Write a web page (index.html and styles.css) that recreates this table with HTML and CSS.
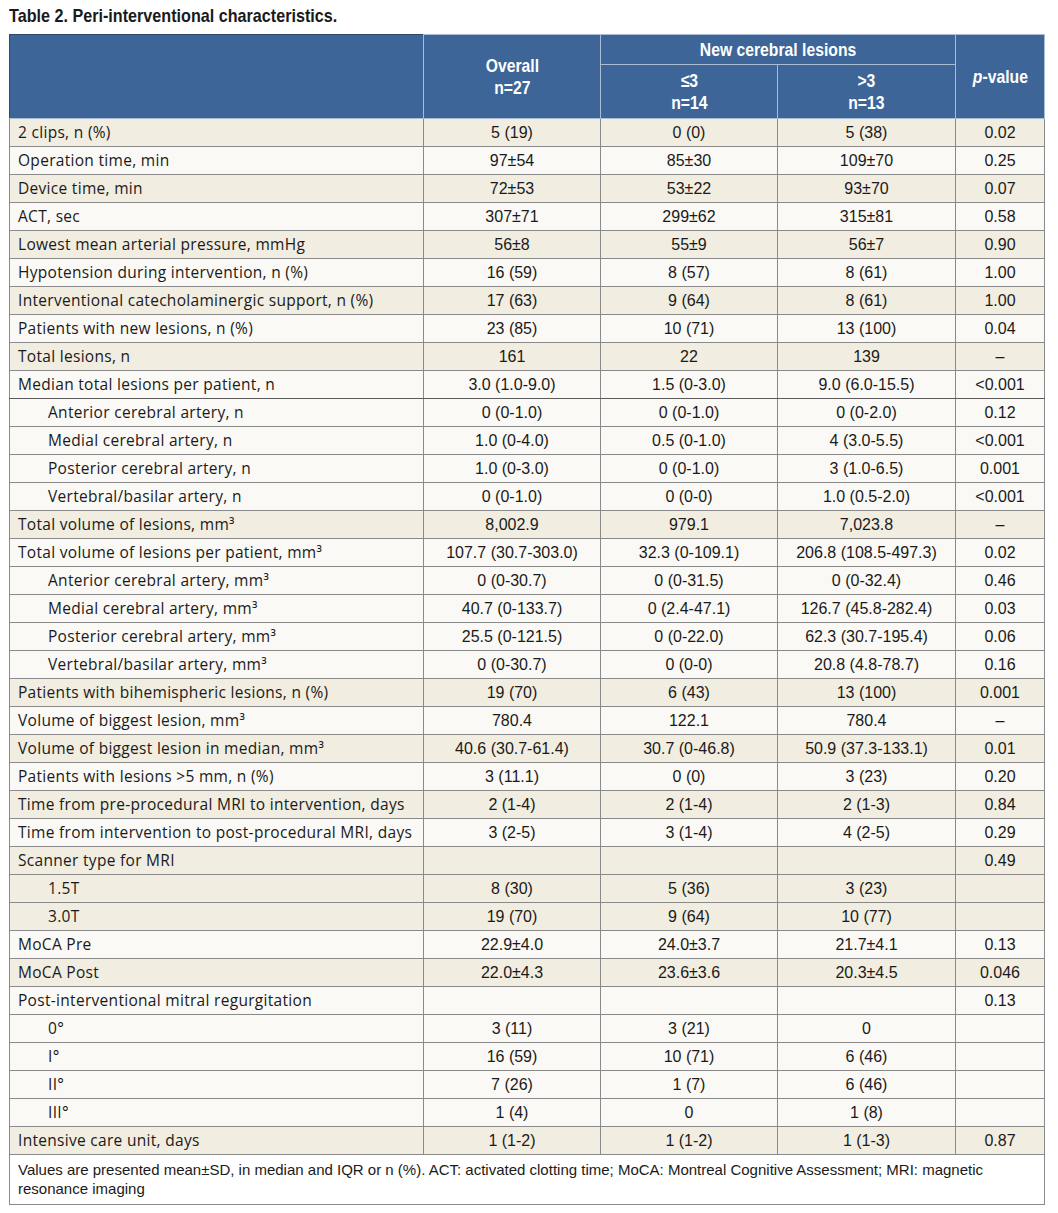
FILE: index.html
```html
<!DOCTYPE html>
<html>
<head>
<meta charset="utf-8">
<link rel="stylesheet" href="styles.css">
</head>
<body>
<div class="page">
<h1 class="title"><span class="cond">Table 2. Peri-interventional characteristics.</span></h1>
<table class="tbl">
<colgroup>
<col class="c-label"><col class="c-num"><col class="c-num"><col class="c-num2"><col class="c-p">
</colgroup>
<thead>
<tr class="h1">
<th rowspan="2"></th>
<th rowspan="2"><span class="cond">Overall<br>n=27</span></th>
<th colspan="2"><span class="cond">New cerebral lesions</span></th>
<th rowspan="2"><span class="cond"><i>p</i>-value</span></th>
</tr>
<tr class="h2">
<th><span class="cond">≤3<br>n=14</span></th>
<th><span class="cond">&gt;3<br>n=13</span></th>
</tr>
</thead>
<tbody>
<tr class="b"><td>2 clips, n (%)</td><td>5 (19)</td><td>0 (0)</td><td>5 (38)</td><td>0.02</td></tr>
<tr class="w"><td>Operation time, min</td><td>97±54</td><td>85±30</td><td>109±70</td><td>0.25</td></tr>
<tr class="b"><td>Device time, min</td><td>72±53</td><td>53±22</td><td>93±70</td><td>0.07</td></tr>
<tr class="w"><td>ACT, sec</td><td>307±71</td><td>299±62</td><td>315±81</td><td>0.58</td></tr>
<tr class="b"><td>Lowest mean arterial pressure, mmHg</td><td>56±8</td><td>55±9</td><td>56±7</td><td>0.90</td></tr>
<tr class="w"><td>Hypotension during intervention, n (%)</td><td>16 (59)</td><td>8 (57)</td><td>8 (61)</td><td>1.00</td></tr>
<tr class="b"><td>Interventional catecholaminergic support, n (%)</td><td>17 (63)</td><td>9 (64)</td><td>8 (61)</td><td>1.00</td></tr>
<tr class="w"><td>Patients with new lesions, n (%)</td><td>23 (85)</td><td>10 (71)</td><td>13 (100)</td><td>0.04</td></tr>
<tr class="b"><td>Total lesions, n</td><td>161</td><td>22</td><td>139</td><td>–</td></tr>
<tr class="w dk"><td>Median total lesions per patient, n</td><td>3.0 (1.0-9.0)</td><td>1.5 (0-3.0)</td><td>9.0 (6.0-15.5)</td><td>&lt;0.001</td></tr>
<tr class="w sub"><td>Anterior cerebral artery, n</td><td>0 (0-1.0)</td><td>0 (0-1.0)</td><td>0 (0-2.0)</td><td>0.12</td></tr>
<tr class="w sub"><td>Medial cerebral artery, n</td><td>1.0 (0-4.0)</td><td>0.5 (0-1.0)</td><td>4 (3.0-5.5)</td><td>&lt;0.001</td></tr>
<tr class="w sub"><td>Posterior cerebral artery, n</td><td>1.0 (0-3.0)</td><td>0 (0-1.0)</td><td>3 (1.0-6.5)</td><td>0.001</td></tr>
<tr class="w sub"><td>Vertebral/basilar artery, n</td><td>0 (0-1.0)</td><td>0 (0-0)</td><td>1.0 (0.5-2.0)</td><td>&lt;0.001</td></tr>
<tr class="b"><td>Total volume of lesions, mm³</td><td>8,002.9</td><td>979.1</td><td>7,023.8</td><td>–</td></tr>
<tr class="w"><td>Total volume of lesions per patient, mm³</td><td>107.7 (30.7-303.0)</td><td>32.3 (0-109.1)</td><td>206.8 (108.5-497.3)</td><td>0.02</td></tr>
<tr class="w sub"><td>Anterior cerebral artery, mm³</td><td>0 (0-30.7)</td><td>0 (0-31.5)</td><td>0 (0-32.4)</td><td>0.46</td></tr>
<tr class="w sub"><td>Medial cerebral artery, mm³</td><td>40.7 (0-133.7)</td><td>0 (2.4-47.1)</td><td>126.7 (45.8-282.4)</td><td>0.03</td></tr>
<tr class="w sub"><td>Posterior cerebral artery, mm³</td><td>25.5 (0-121.5)</td><td>0 (0-22.0)</td><td>62.3 (30.7-195.4)</td><td>0.06</td></tr>
<tr class="w sub"><td>Vertebral/basilar artery, mm³</td><td>0 (0-30.7)</td><td>0 (0-0)</td><td>20.8 (4.8-78.7)</td><td>0.16</td></tr>
<tr class="b"><td>Patients with bihemispheric lesions, n (%)</td><td>19 (70)</td><td>6 (43)</td><td>13 (100)</td><td>0.001</td></tr>
<tr class="w"><td>Volume of biggest lesion, mm³</td><td>780.4</td><td>122.1</td><td>780.4</td><td>–</td></tr>
<tr class="b"><td>Volume of biggest lesion in median, mm³</td><td>40.6 (30.7-61.4)</td><td>30.7 (0-46.8)</td><td>50.9 (37.3-133.1)</td><td>0.01</td></tr>
<tr class="w"><td>Patients with lesions &gt;5 mm, n (%)</td><td>3 (11.1)</td><td>0 (0)</td><td>3 (23)</td><td>0.20</td></tr>
<tr class="b"><td>Time from pre-procedural MRI to intervention, days</td><td>2 (1-4)</td><td>2 (1-4)</td><td>2 (1-3)</td><td>0.84</td></tr>
<tr class="w"><td>Time from intervention to post-procedural MRI, days</td><td>3 (2-5)</td><td>3 (1-4)</td><td>4 (2-5)</td><td>0.29</td></tr>
<tr class="b"><td>Scanner type for MRI</td><td></td><td></td><td></td><td>0.49</td></tr>
<tr class="b sub"><td>1.5T</td><td>8 (30)</td><td>5 (36)</td><td>3 (23)</td><td></td></tr>
<tr class="b sub"><td>3.0T</td><td>19 (70)</td><td>9 (64)</td><td>10 (77)</td><td></td></tr>
<tr class="w"><td>MoCA Pre</td><td>22.9±4.0</td><td>24.0±3.7</td><td>21.7±4.1</td><td>0.13</td></tr>
<tr class="b"><td>MoCA Post</td><td>22.0±4.3</td><td>23.6±3.6</td><td>20.3±4.5</td><td>0.046</td></tr>
<tr class="w"><td>Post-interventional mitral regurgitation</td><td></td><td></td><td></td><td>0.13</td></tr>
<tr class="w sub"><td>0°</td><td>3 (11)</td><td>3 (21)</td><td>0</td><td></td></tr>
<tr class="w sub"><td>I°</td><td>16 (59)</td><td>10 (71)</td><td>6 (46)</td><td></td></tr>
<tr class="w sub"><td>II°</td><td>7 (26)</td><td>1 (7)</td><td>6 (46)</td><td></td></tr>
<tr class="w sub"><td>III°</td><td>1 (4)</td><td>0</td><td>1 (8)</td><td></td></tr>
<tr class="b"><td>Intensive care unit, days</td><td>1 (1-2)</td><td>1 (1-2)</td><td>1 (1-3)</td><td>0.87</td></tr>
</tbody>
<tfoot>
<tr><td colspan="5" class="note">Values are presented mean±SD, in median and IQR or n (%). ACT: activated clotting time; MoCA: Montreal Cognitive Assessment; MRI: magnetic resonance imaging</td></tr>
</tfoot>
</table>
</div>
</body>
</html>
```

FILE: styles.css
```css
html, body {
  margin: 0;
  padding: 0;
  background: #ffffff;
}
.page {
  padding: 5px 0 0 9px;
  width: 1035px;
}
.cond {
  display: inline-block;
  transform: scaleX(0.85);
}
.title {
  margin: 0;
  height: 29px;
  font-family: "Liberation Sans", Arial, sans-serif;
  font-weight: bold;
  font-size: 19px;
  line-height: 21px;
  color: #1a1a1a;
}
.title .cond {
  transform-origin: left center;
  transform: scaleX(0.85);
  white-space: nowrap;
}
.tbl {
  border-collapse: collapse;
  width: 1035px;
  table-layout: fixed;
  font-family: "Liberation Sans", Arial, sans-serif;
  font-size: 16px;
  color: #1a1a1a;
  border: 1px solid #6f6f6f;
}
.c-label { width: 414px; }
.c-num { width: 177px; }
.c-num2 { width: 178px; }
.c-p { width: 89px; }
thead th {
  background: #3d6597;
  color: #ffffff;
  font-family: "Liberation Sans", Arial, sans-serif;
  font-weight: bold;
  font-size: 18.5px;
  line-height: 22px;
  text-align: center;
  vertical-align: middle;
  border: 1px solid #a9bcd3;
  padding: 0;
}
thead th .cond { transform-origin: center center; }
thead th i { font-style: italic; }
.h1 th { height: 29px; }
.h2 th { height: 53px; }
.h1 th:first-child { border-left-color: #2c4a70; border-top-color: #2c4a70; }
tbody td {
  height: 27px;
  padding: 0;
  line-height: 27px;
  text-align: center;
  border: 1px solid #8a8a8a;
  white-space: nowrap;
}
tbody td:first-child {
  text-align: left;
  padding-left: 8px;
  font-family: "Open Sans", "Liberation Sans", sans-serif;
  font-size: 15.5px;
  letter-spacing: 0.3px;
}
tbody tr.sub td:first-child { padding-left: 38px; }
tbody tr.b td { background: #f1ede0; }
tbody tr.w td { background: #faf9f5; }
tbody tr.dk td { border-bottom-color: #5a5a5a; }
.note {
  background: #ffffff;
  border: 1px solid #8a8a8a;
  padding: 5px 8px 6px 8px;
  font-size: 15px;
  line-height: 19px;
  text-align: left;
  color: #1a1a1a;
}
```
